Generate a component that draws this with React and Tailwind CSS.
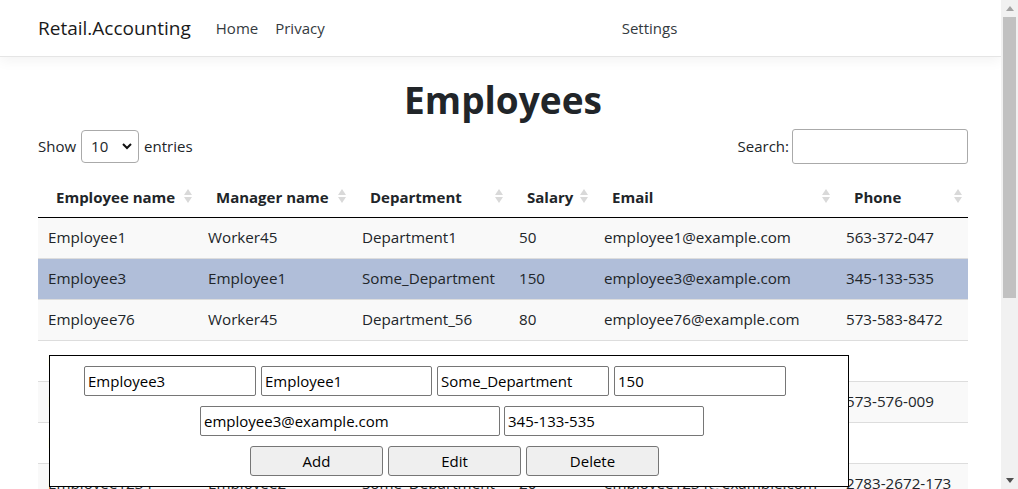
const rows = [
  { name: 'Employee1', manager: 'Worker45', dept: 'Department1', salary: '50', email: 'employee1@example.com', phone: '563-372-047' },
  { name: 'Employee3', manager: 'Employee1', dept: 'Some_Department', salary: '150', email: 'employee3@example.com', phone: '345-133-535', selected: true },
  { name: 'Employee76', manager: 'Worker45', dept: 'Department_56', salary: '80', email: 'employee76@example.com', phone: '573-583-8472' },
  { name: 'Employee8', manager: 'Employee3', dept: 'Department1', salary: '90', email: 'employee8@example.com', phone: '' },
  { name: 'Employee12', manager: 'Worker45', dept: 'Department_56', salary: '70', email: 'employee12@example.com', phone: '573-576-009' },
  { name: 'Employee21', manager: 'Employee1', dept: 'Department1', salary: '60', email: 'employee21@example.com', phone: '' },
  { name: 'Employee1234', manager: 'Employee2', dept: 'Some_Department', salary: '20', email: 'employee1234@example.com', phone: '2783-2672-173' },
];

const cols = [
  { label: 'Employee name', w: 'w-[160px]' },
  { label: 'Manager name', w: 'w-[154px]' },
  { label: 'Department', w: 'w-[157px]' },
  { label: 'Salary', w: 'w-[85px]' },
  { label: 'Email', w: 'w-[242px]' },
  { label: 'Phone', w: 'w-[132px]' },
];

function SortIcon() {
  return (
    <svg width="8" height="14" viewBox="0 0 8 14" className="absolute right-[6px] top-[13px]">
      <path d="M4 0 L8 6 L0 6 Z" fill="#d9d9d9" />
      <path d="M4 14 L8 8 L0 8 Z" fill="#d9d9d9" />
    </svg>
  );
}

function Field({ value, w }) {
  return (
    <input
      readOnly
      value={value}
      className={`${w} h-[30px] rounded-[2px] border border-[#767676] bg-white px-[3px] text-[15px] text-black outline-none`}
    />
  );
}

function Btn({ children }) {
  return (
    <button className="h-[30px] w-[133px] rounded-[3px] border border-[#767676] bg-[#efefef] text-[15px] text-black">
      {children}
    </button>
  );
}

export default function App() {
  return (
    <div className="flex h-[489px] w-[1018px] overflow-hidden bg-white font-['Open_Sans',sans-serif] text-[15.2px] text-[#212529]">
      <div className="relative flex-1 overflow-hidden">
        <nav className="flex h-[57px] items-center border-b border-[#e5e5e5] shadow-[0_4px_12px_rgba(0,0,0,0.05)]">
          <span className="ml-[38px] text-[19px] text-[#1a1a1a]">Retail.Accounting</span>
          <span className="ml-[25px] text-[15px] text-[#343a40]">Home</span>
          <span className="ml-[17px] text-[15px] text-[#343a40]">Privacy</span>
          <span className="ml-[297px] text-[15px] text-[#343a40]">Settings</span>
        </nav>

        <div className="ml-[38px] w-[930px]">
          <h1 className="mt-[19px] h-[48px] text-center text-[37px] font-bold leading-[48px]">Employees</h1>

          <div className="mt-[5px] flex h-[35px] items-center justify-between text-[15px]">
            <div className="flex items-center">
              <span>Show</span>
              <div className="mx-[5px] flex h-[33px] w-[58px] items-center justify-between rounded-[4px] border border-[#aaa] pl-[9px] pr-[6px]">
                <span>10</span>
                <svg width="10" height="7" viewBox="0 0 10 7">
                  <path d="M1 1 L5 5 L9 1" stroke="#111" strokeWidth="2" fill="none" />
                </svg>
              </div>
              <span>entries</span>
            </div>
            <div className="flex items-center">
              <span>Search:</span>
              <div className="ml-[3px] h-[35px] w-[176px] rounded-[3px] border border-[#aaa]" />
            </div>
          </div>

          <table className="mt-[12px] w-[930px] table-fixed border-collapse">
            <thead>
              <tr className="h-[41px] border-b border-black">
                {cols.map((c) => (
                  <th key={c.label} className={`${c.w} relative pl-[18px] pt-[1px] text-left text-[15px] font-bold`}>
                    {c.label}
                    <SortIcon />
                  </th>
                ))}
              </tr>
            </thead>
            <tbody>
              {rows.map((r, i) => (
                <tr
                  key={r.name}
                  className={`h-[41px] border-t border-[#ddd] ${r.selected ? 'bg-[#b0bed9]' : i % 2 === 0 ? 'bg-[#f9f9f9]' : 'bg-white'}`}
                >
                  <td className="pl-[10px]">{r.name}</td>
                  <td className="pl-[10px]">{r.manager}</td>
                  <td className="pl-[10px]">{r.dept}</td>
                  <td className="pl-[10px]">{r.salary}</td>
                  <td className="pl-[10px]">{r.email}</td>
                  <td className="pl-[10px]">{r.phone}</td>
                </tr>
              ))}
            </tbody>
          </table>
        </div>

        <div className="absolute left-[49px] top-[355px] flex h-[132px] w-[800px] flex-col gap-[10px] border border-black bg-white pt-[10px]">
          <div className="flex gap-[5px] pl-[34px]">
            <Field value="Employee3" w="w-[172px]" />
            <Field value="Employee1" w="w-[171px]" />
            <Field value="Some_Department" w="w-[172px]" />
            <Field value="150" w="w-[172px]" />
          </div>
          <div className="flex gap-[4px] pl-[150px]">
            <Field value="employee3@example.com" w="w-[300px]" />
            <Field value="345-133-535" w="w-[200px]" />
          </div>
          <div className="flex gap-[5px] pl-[200px]">
            <Btn>Add</Btn>
            <Btn>Edit</Btn>
            <Btn>Delete</Btn>
          </div>
        </div>
      </div>

      <div className="flex w-[17px] flex-col bg-[#f1f1f1]">
        <div className="flex h-[17px] items-center justify-center">
          <svg width="8" height="5" viewBox="0 0 8 5"><path d="M4 0 L8 5 L0 5 Z" fill="#a3a3a3" /></svg>
        </div>
        <div className="mx-[2px] h-[281px] bg-[#c1c1c1]" />
        <div className="flex-1" />
        <div className="flex h-[17px] items-center justify-center">
          <svg width="8" height="5" viewBox="0 0 8 5"><path d="M0 0 L8 0 L4 5 Z" fill="#505050" /></svg>
        </div>
      </div>
    </div>
  );
}
